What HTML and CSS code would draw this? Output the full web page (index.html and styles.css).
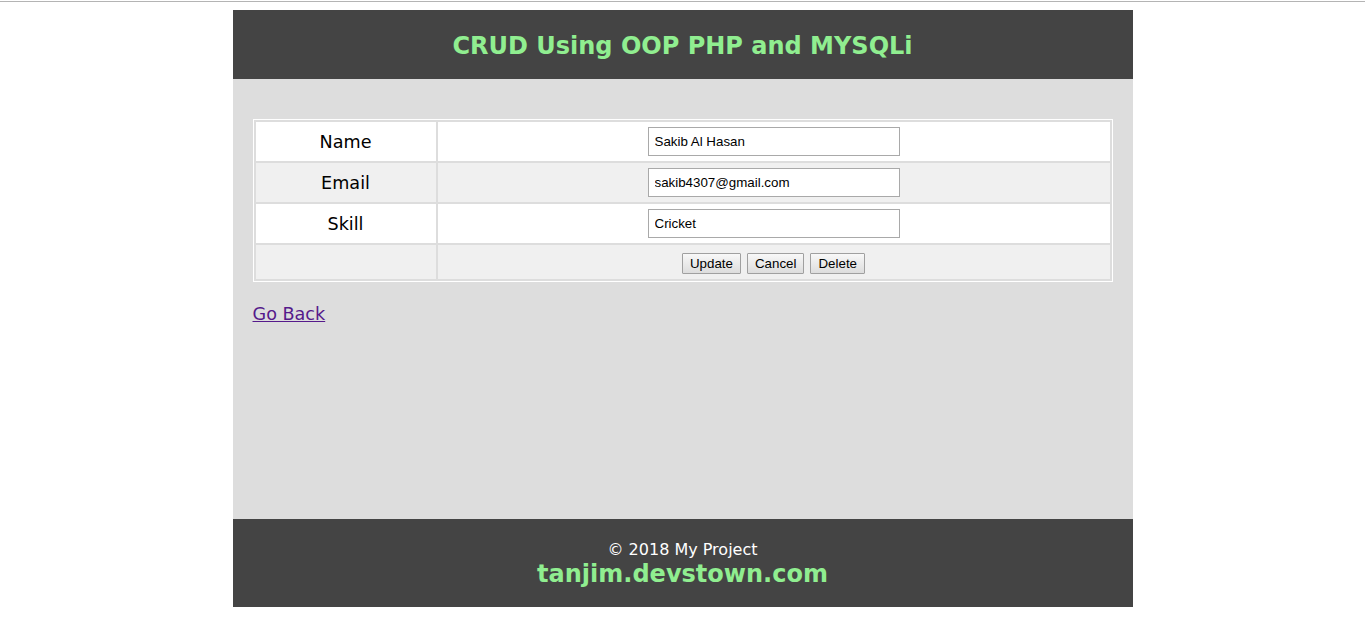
FILE: index.html
```html
<!DOCTYPE html>
<html>
<head>
<meta charset="utf-8">
<title>CRUD Using OOP PHP and MYSQLi</title>
<link rel="stylesheet" href="styles.css">
</head>
<body>
<div class="topline"></div>
<div class="wrapper">
  <header class="header">
    <h2 class="title">CRUD Using OOP PHP and MYSQLi</h2>
  </header>
  <main class="content">
    <form class="form">
      <table class="tbl">
        <tr class="row-odd">
          <td class="label">Name</td>
          <td class="field"><input class="input" type="text" value="Sakib Al Hasan"></td>
        </tr>
        <tr class="row-even">
          <td class="label">Email</td>
          <td class="field"><input class="input" type="text" value="sakib4307@gmail.com"></td>
        </tr>
        <tr class="row-odd">
          <td class="label">Skill</td>
          <td class="field"><input class="input" type="text" value="Cricket"></td>
        </tr>
        <tr class="row-even row-actions">
          <td class="label"></td>
          <td class="field">
            <div class="actions">
              <button type="button" class="btn">Update</button>
              <button type="button" class="btn">Cancel</button>
              <button type="button" class="btn">Delete</button>
            </div>
          </td>
        </tr>
      </table>
    </form>
    <a class="back" href="#">Go Back</a>
  </main>
  <footer class="footer">
    <div class="copy">&copy; 2018 My Project</div>
    <div class="site">tanjim.devstown.com</div>
  </footer>
</div>
</body>
</html>
```
FILE: styles.css
```css
html, body {
  margin: 0;
  padding: 0;
  background: #fff;
}
body {
  font-family: "DejaVu Sans", Verdana, sans-serif;
}
.topline {
  height: 1px;
  margin-top: 1px;
  background: #b4b4b4;
}
.wrapper {
  width: 900px;
  margin: 8px auto 0;
}
.header {
  background: #444;
  height: 69px;
  box-sizing: border-box;
  padding-top: 2px;
  display: flex;
  align-items: center;
  justify-content: center;
}
.title {
  margin: 0;
  color: #90ee90;
  font-size: 24px;
  font-weight: bold;
}
.content {
  background: #ddd;
  height: 440px;
  box-sizing: border-box;
  padding: 40px 20px 0;
}
.form {
  margin: 0;
}
.tbl {
  width: 860px;
  border: 1px solid #fff;
  border-spacing: 2px;
  box-sizing: border-box;
}
.tbl td {
  padding: 0;
}
.row-odd td {
  background: #fff;
  height: 39px;
}
.row-even td {
  background: #f0f0f0;
  height: 39px;
}
.row-actions td {
  height: 34px;
}
.label {
  width: 180px;
  text-align: center;
  font-size: 17.6px;
  color: #000;
}
.field {
  text-align: center;
}
.input {
  width: 252px;
  height: 29px;
  box-sizing: border-box;
  border: 1px solid #a9a9a9;
  padding: 0 6px;
  font-family: "Liberation Sans", Arial, sans-serif;
  font-size: 13.33px;
  color: #000;
  background: #fff;
  vertical-align: middle;
  display: inline-block;
}
.actions {
  display: flex;
  justify-content: center;
  gap: 6px;
  padding-top: 3px;
}
.btn {
  font-family: "Liberation Sans", Arial, sans-serif;
  font-size: 13.33px;
  color: #000;
  height: 21px;
  padding: 0 7px;
  border: 1px solid #a0a0a0;
  border-radius: 1px;
  background: linear-gradient(#f8f8f8, #dddddd);
}
.back {
  display: inline-block;
  margin-top: 22px;
  font-size: 17.6px;
  color: #551a8b;
  text-decoration: underline;
}
.footer {
  background: #444;
  height: 88px;
  box-sizing: border-box;
  padding-top: 21px;
  text-align: center;
}
.copy {
  color: #fff;
  font-size: 16px;
  line-height: 20px;
}
.site {
  color: #90ee90;
  font-size: 24px;
  font-weight: bold;
  line-height: 28px;
}
```
